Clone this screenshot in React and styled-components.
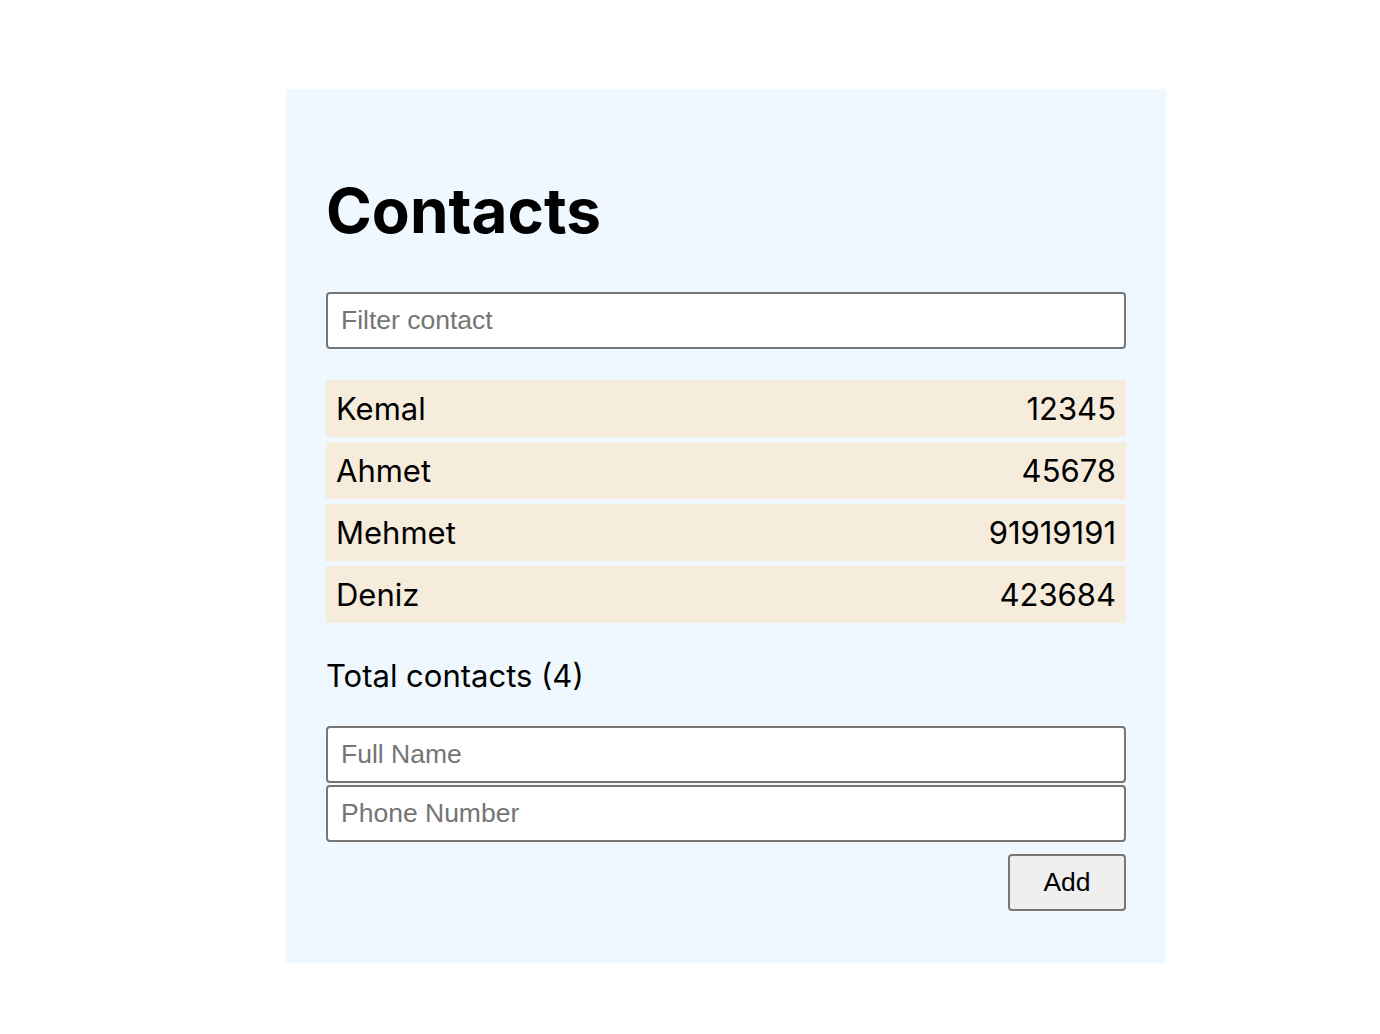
import { useState } from "react";
import styled, { createGlobalStyle } from "styled-components";

const initialContacts = [
  { name: "Kemal", phone: "12345" },
  { name: "Ahmet", phone: "45678" },
  { name: "Mehmet", phone: "91919191" },
  { name: "Deniz", phone: "423684" },
];

export default function App() {
  const [contacts, setContacts] = useState(initialContacts);
  const [filter, setFilter] = useState("");
  const [form, setForm] = useState({ name: "", phone: "" });

  const filtered = contacts.filter((c) =>
    c.name.toLowerCase().includes(filter.toLowerCase())
  );

  function addContact(e) {
    e.preventDefault();
    if (!form.name || !form.phone) return;
    setContacts([...contacts, form]);
    setForm({ name: "", phone: "" });
  }

  return (
    <>
      <GlobalStyle />
      <Page>
        <Panel>
          <Title>Contacts</Title>
          <Input
            placeholder="Filter contact"
            value={filter}
            onChange={(e) => setFilter(e.target.value)}
          />
          <List>
            {filtered.map((c, i) => (
              <Item key={i}>
                <span>{c.name}</span>
                <span>{c.phone}</span>
              </Item>
            ))}
          </List>
          <Total>Total contacts ({filtered.length})</Total>
          <Form onSubmit={addContact}>
            <Input
              placeholder="Full Name"
              value={form.name}
              onChange={(e) => setForm({ ...form, name: e.target.value })}
            />
            <Input
              placeholder="Phone Number"
              value={form.phone}
              onChange={(e) => setForm({ ...form, phone: e.target.value })}
            />
            <Actions>
              <Button type="submit">Add</Button>
            </Actions>
          </Form>
        </Panel>
      </Page>
    </>
  );
}

const GlobalStyle = createGlobalStyle`
  * {
    box-sizing: border-box;
  }

  body {
    margin: 0;
    background: #fff;
    font-family: Inter, "Noto Sans", sans-serif;
  }
`;

const Page = styled.div`
  display: flex;
  justify-content: center;
  padding: 89px 0 0 72px;
`;

const Panel = styled.div`
  width: 880px;
  min-height: 874px;
  background-color: #f0f8ff;
  padding: 40px;
  display: flex;
  flex-direction: column;
`;

const Title = styled.h1`
  font-family: Inter, sans-serif;
  font-size: 62px;
  font-weight: 700;
  margin: 43px 0;
  line-height: 77px;
  color: #000;
`;

const Input = styled.input`
  display: block;
  width: 100%;
  height: 57px;
  padding: 0 13px;
  border: 2px solid #767676;
  border-radius: 4px;
  background: #fff;
  font-family: "Liberation Sans", Arial, sans-serif;
  font-size: 26.5px;
  color: #000;

  &::placeholder {
    color: #757575;
  }
`;

const List = styled.ul`
  list-style: none;
  margin: 31px 0 0;
  padding: 0;
  display: flex;
  flex-direction: column;
  gap: 5px;
`;

const Item = styled.li`
  height: 57px;
  padding: 0 10px;
  display: flex;
  justify-content: space-between;
  align-items: center;
  background-color: #f6ecdc;
  font-size: 31px;
  color: #000;
`;

const Total = styled.p`
  margin: 34px 0 31px;
  font-size: 31px;
  line-height: 38px;
  color: #000;
`;

const Form = styled.form`
  display: flex;
  flex-direction: column;
  gap: 2px;
`;

const Actions = styled.div`
  display: flex;
  justify-content: flex-end;
  margin-top: 10px;
`;

const Button = styled.button`
  width: 118px;
  height: 57px;
  border: 2px solid #767676;
  border-radius: 4px;
  background-color: #efefef;
  font-family: "Liberation Sans", Arial, sans-serif;
  font-size: 26.5px;
  color: #000;
`;
